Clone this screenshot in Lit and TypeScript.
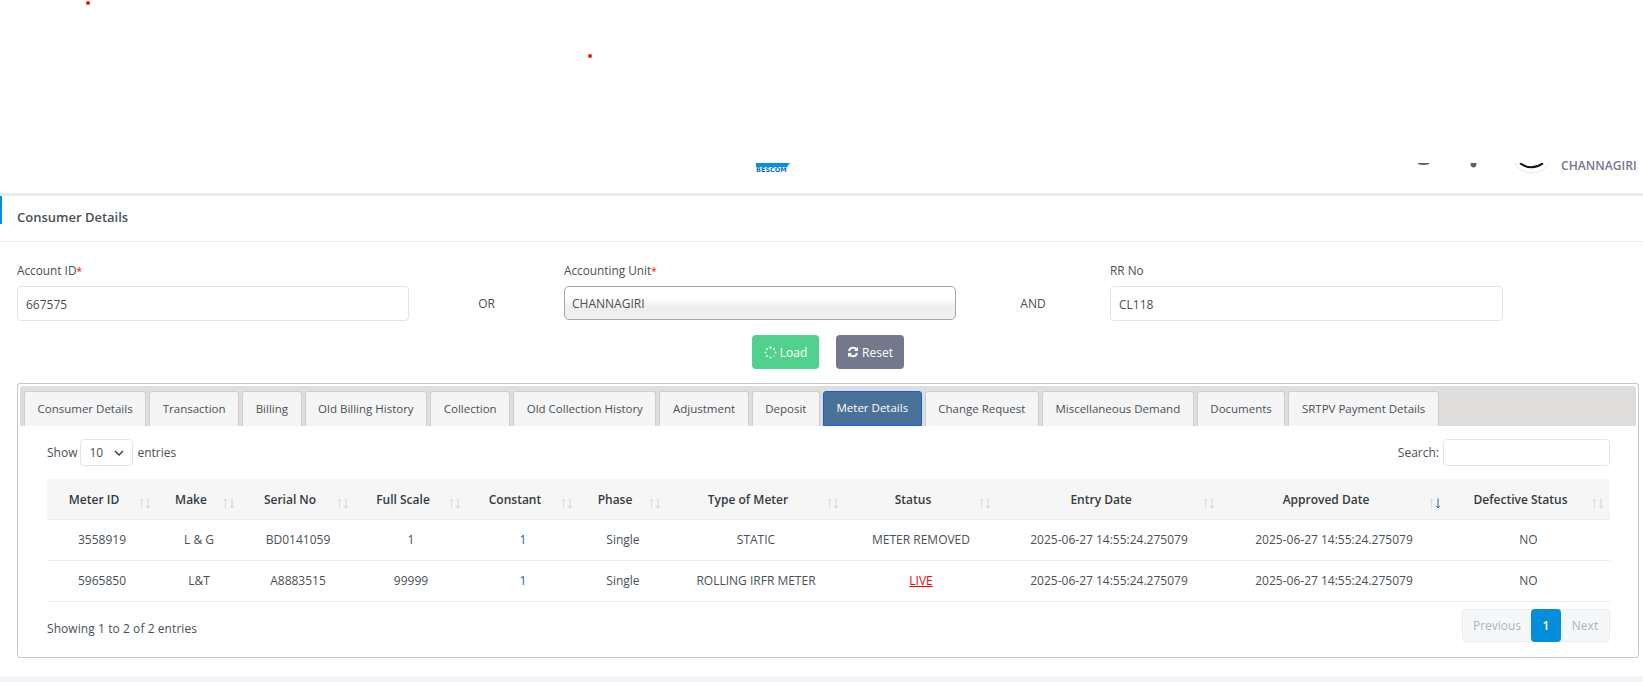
import { LitElement, html, css } from "lit";
import { customElement } from "lit/decorators.js";

const tabs = ["Consumer Details","Transaction","Billing","Old Billing History","Collection","Old Collection History","Adjustment","Deposit","Meter Details","Change Request","Miscellaneous Demand","Documents","SRTPV Payment Details"];
const cols: [string, number][] = [["Meter ID",110],["Make",84],["Serial No",114],["Full Scale",112],["Constant",112],["Phase",88],["Type of Meter",178],["Status",152],["Entry Date",224],["Approved Date",226],["Defective Status",163]];
const rows = [
  ["3558919","L & G","BD0141059","1","1","Single","STATIC","METER REMOVED","2025-06-27 14:55:24.275079","2025-06-27 14:55:24.275079","NO"],
  ["5965850","L&T","A8883515","99999","1","Single","ROLLING IRFR METER","LIVE","2025-06-27 14:55:24.275079","2025-06-27 14:55:24.275079","NO"],
];

const sortIcon = (active: boolean) => html`<svg class="sort" width="12" height="11" viewBox="0 0 12 11" fill="none" stroke-width="1">
  <path d="M2.5 10.5V1M.6 3.2 2.5 1l1.9 2.2" stroke="#d3dde4"></path>
  <path d="M9 .5V10M7.1 7.8 9 10l1.9-2.2" stroke=${active ? "#2f6390" : "#cfd3d9"}></path>
</svg>`;

@customElement("app-root")
export class AppRoot extends LitElement {
  static styles = css`
    :host { display:block; width:1643px; height:682px; overflow:hidden; background:#f3f3f9; font-family:"Open Sans","Noto Sans",sans-serif; font-size:12px; color:#495057; }
    * { box-sizing:border-box; }
    .dot { position:absolute; width:4px; height:4px; border-radius:50%; background:#e8112d; }
    .top { position:relative; height:193px; background:#fff; display:flex; align-items:flex-start; padding-top:163px; overflow:hidden; }
    .logo { margin-left:756px; width:34px; display:flex; flex-direction:column; gap:1px; }
    .logo svg { display:block; }
    .logo span { font:bold 6.5px/5px "DejaVu Sans",sans-serif; color:#1173b8; white-space:nowrap; }
    .hdr-right { margin-left:auto; display:flex; align-items:flex-start; }
    .hdr-right svg { display:block; }
    .user { font-size:12.1px; line-height:10px; color:#74788d; margin:-2px 0 0 8px; width:82px; font-weight:600; white-space:nowrap; }
    .band { height:3px; background:#ebebf1; }
    .card { background:#fff; height:480px; }
    .title-row { height:45px; display:flex; }
    .accent { width:2px; height:28px; background:#038edc; }
    .title-text { margin:11px 0 0 15px; font-size:13px; line-height:20px; font-weight:600; color:#495057; }
    .divider { height:1px; background:#ebedf0; }
    .form { display:grid; grid-template-columns:392px 155px 392px 154px 393px; padding:20px 0 0 17px; }
    .lbl { font-size:11.8px; line-height:16px; height:24px; color:#495057; }
    .req { color:#f00; font-size:10px; }
    .input { height:35px; border:1px solid #e2e5e8; border-radius:4px; padding:0 8px; line-height:35px; font-size:12px; color:#495057; background:#fff; }
    .select { border:1px solid #a6a6a6; border-radius:5px; background:linear-gradient(#fff 35%,#eee 62%,#f0f0f0 100%); padding-left:7px; height:34px; line-height:33px; }
    .conj { display:flex; align-items:center; justify-content:center; padding-top:24px; font-size:12px; color:#495057; }
    .btns { display:flex; gap:17px; padding:14px 0 0 752px; }
    .btn { height:34px; border-radius:4px; color:#fff; display:flex; align-items:center; justify-content:center; gap:3px; font-size:12px; }
    .load { width:67px; background:#51d28c; }
    .reset { width:68px; background:#74788d; }
    .panel { margin:14px 4px 0 17px; height:275px; border:1px solid #c8c8c8; border-radius:3px; padding:2px 2px 0 2px; }
    .tabbar { display:flex; height:40px; gap:3.1px; padding:5px 0 0 4px; background:#e0dedd; border-radius:3px 3px 0 0; }
    .tab { height:35px; padding:0 12.5px 2px; display:flex; align-items:center; border:1px solid #cfcfcf; border-bottom:none; background:#f5f5f5; border-radius:3px 3px 0 0; color:#495057; font-size:11.5px; white-space:nowrap; }
    .tab.on { background:#4a7198; border:1px solid #0f62d6; color:#fff; }
    .body { padding:13px 26px 0 27px; }
    .ctl { display:flex; align-items:center; height:27px; }
    .sel { width:53px; height:27px; border:1px solid #e2e5e8; border-radius:4px; margin:0 4px 0 3px; display:flex; align-items:center; justify-content:space-between; padding:0 8px; color:#495057; }
    .search { width:167px; height:27px; border:1px solid #e2e5e8; border-radius:4px; margin-left:4px; background:#fff; }
    .sp { flex:1; }
    table { border-collapse:collapse; table-layout:fixed; width:1563px; margin-top:13px; }
    th { position:relative; height:40px; background:#f6f6f6; padding:2px 28px 0 12px; font-size:12px; font-weight:600; color:#343a40; text-align:center; border-bottom:1px solid #ebedf0; white-space:nowrap; }
    td { height:41px; padding:0; text-align:center; font-size:12px; color:#495057; border-bottom:1px solid #ebedf0; white-space:nowrap; }
    .sort { position:absolute; right:6px; top:19px; }
    .live { color:#f00; text-decoration:underline; }
    .link { color:#1f5f9f; }
    .foot { display:flex; align-items:flex-start; justify-content:space-between; padding-top:7px; }
    .foot .info { padding-top:11px; line-height:18px; letter-spacing:.07px; }
    .pager { display:flex; height:33px; border:1px solid #e9ebee; border-radius:4px; background:#f6f7f9; color:#adb5bd; }
    .pager span { display:flex; align-items:center; justify-content:center; }
    .pv { width:68px; }
    .nx { width:48px; }
    .cur { width:30px; margin:-1px 0; background:#038edc; color:#fff; border-radius:4px; font-weight:600; }
  `;
  render() {
    return html`
      <div class="top">
        <div class="dot" style="left:86px;top:1px"></div>
        <div class="dot" style="left:588px;top:54px"></div>
        <div class="logo">
          <svg width="34" height="4" viewBox="0 0 34 4"><path d="M0 0H34L31 4H0Z" fill="#0b8fe0"></path></svg>
          <span>BESCOM</span>
        </div>
        <div class="hdr-right">
          <svg width="136" height="11" viewBox="0 0 136 11" fill="none">
            <path d="M1 .3Q6.5 2.4 12 .3Z" stroke="#5d6072" stroke-width="1.4" fill="#5d6072"></path>
            <path d="M53.5 0Q53.5 4.5 56.5 4.5T59.5 0Z" fill="#5d6072"></path>
            <circle cx="115" cy="-10" r="20" stroke="#e6e8ec" stroke-width="1"></circle>
            <path d="M103 .2Q114.5 8.4 126 .2" stroke="#111" stroke-width="2"></path>
          </svg>
          <div class="user">CHANNAGIRI</div>
        </div>
      </div>
      <div class="band"></div>
      <div class="card">
        <div class="title-row"><div class="accent"></div><div class="title-text">Consumer Details</div></div>
        <div class="divider"></div>
        <div class="form">
          <div><div class="lbl">Account ID<span class="req">*</span></div><div class="input">667575</div></div>
          <div class="conj">OR</div>
          <div><div class="lbl">Accounting Unit<span class="req">*</span></div><div class="input select">CHANNAGIRI</div></div>
          <div class="conj">AND</div>
          <div><div class="lbl">RR No</div><div class="input">CL118</div></div>
        </div>
        <div class="btns">
          <div class="btn load">
            <svg width="13" height="13" viewBox="0 0 13 13" fill="#fff"><circle cx="6.5" cy="1.5" r="1.2"></circle><circle cx="10" cy="3" r="1"></circle><circle cx="11.5" cy="6.5" r=".9"></circle><circle cx="10" cy="10" r=".7"></circle><circle cx="6.5" cy="11.5" r="1"></circle><circle cx="3" cy="10" r=".9"></circle><circle cx="1.5" cy="6.5" r=".9"></circle><circle cx="3" cy="3" r="1"></circle></svg>
            Load
          </div>
          <div class="btn reset">
            <svg width="12" height="12" viewBox="0 0 12 12" fill="none" stroke="#fff" stroke-width="2"><path d="M2 5a4.2 4.2 0 0 1 7.5-1.6"></path><path d="M10 7a4.2 4.2 0 0 1-7.5 1.6"></path><path d="M11 .8V5H7Z" fill="#fff" stroke="none"></path><path d="M1 11.2V7h4Z" fill="#fff" stroke="none"></path></svg>
            Reset
          </div>
        </div>
        <div class="panel">
          <div class="tabbar">${tabs.map(t => html`<div class="tab ${t === "Meter Details" ? "on" : ""}">${t}</div>`)}</div>
          <div class="body">
            <div class="ctl">Show
              <div class="sel">10 <svg width="10" height="6" viewBox="0 0 10 6" fill="none" stroke="#343a40" stroke-width="1.4"><path d="M1 1l4 4 4-4"></path></svg></div>
              entries<div class="sp"></div>Search:<div class="search"></div>
            </div>
            <table>
              <colgroup>${cols.map(c => html`<col style="width:${c[1]}px">`)}</colgroup>
              <thead><tr>${cols.map((c, i) => html`<th>${c[0]}${sortIcon(i === 9)}</th>`)}</tr></thead>
              <tbody>${rows.map(r => html`<tr>${r.map((v, i) => html`<td class=${i === 4 ? "link" : ""}>${v === "LIVE" ? html`<span class="live">LIVE</span>` : v}</td>`)}</tr>`)}</tbody>
            </table>
            <div class="foot">
              <div class="info">Showing 1 to 2 of 2 entries</div>
              <div class="pager"><span class="pv">Previous</span><span class="cur">1</span><span class="nx">Next</span></div>
            </div>
          </div>
        </div>
      </div>
    `;
  }
}
